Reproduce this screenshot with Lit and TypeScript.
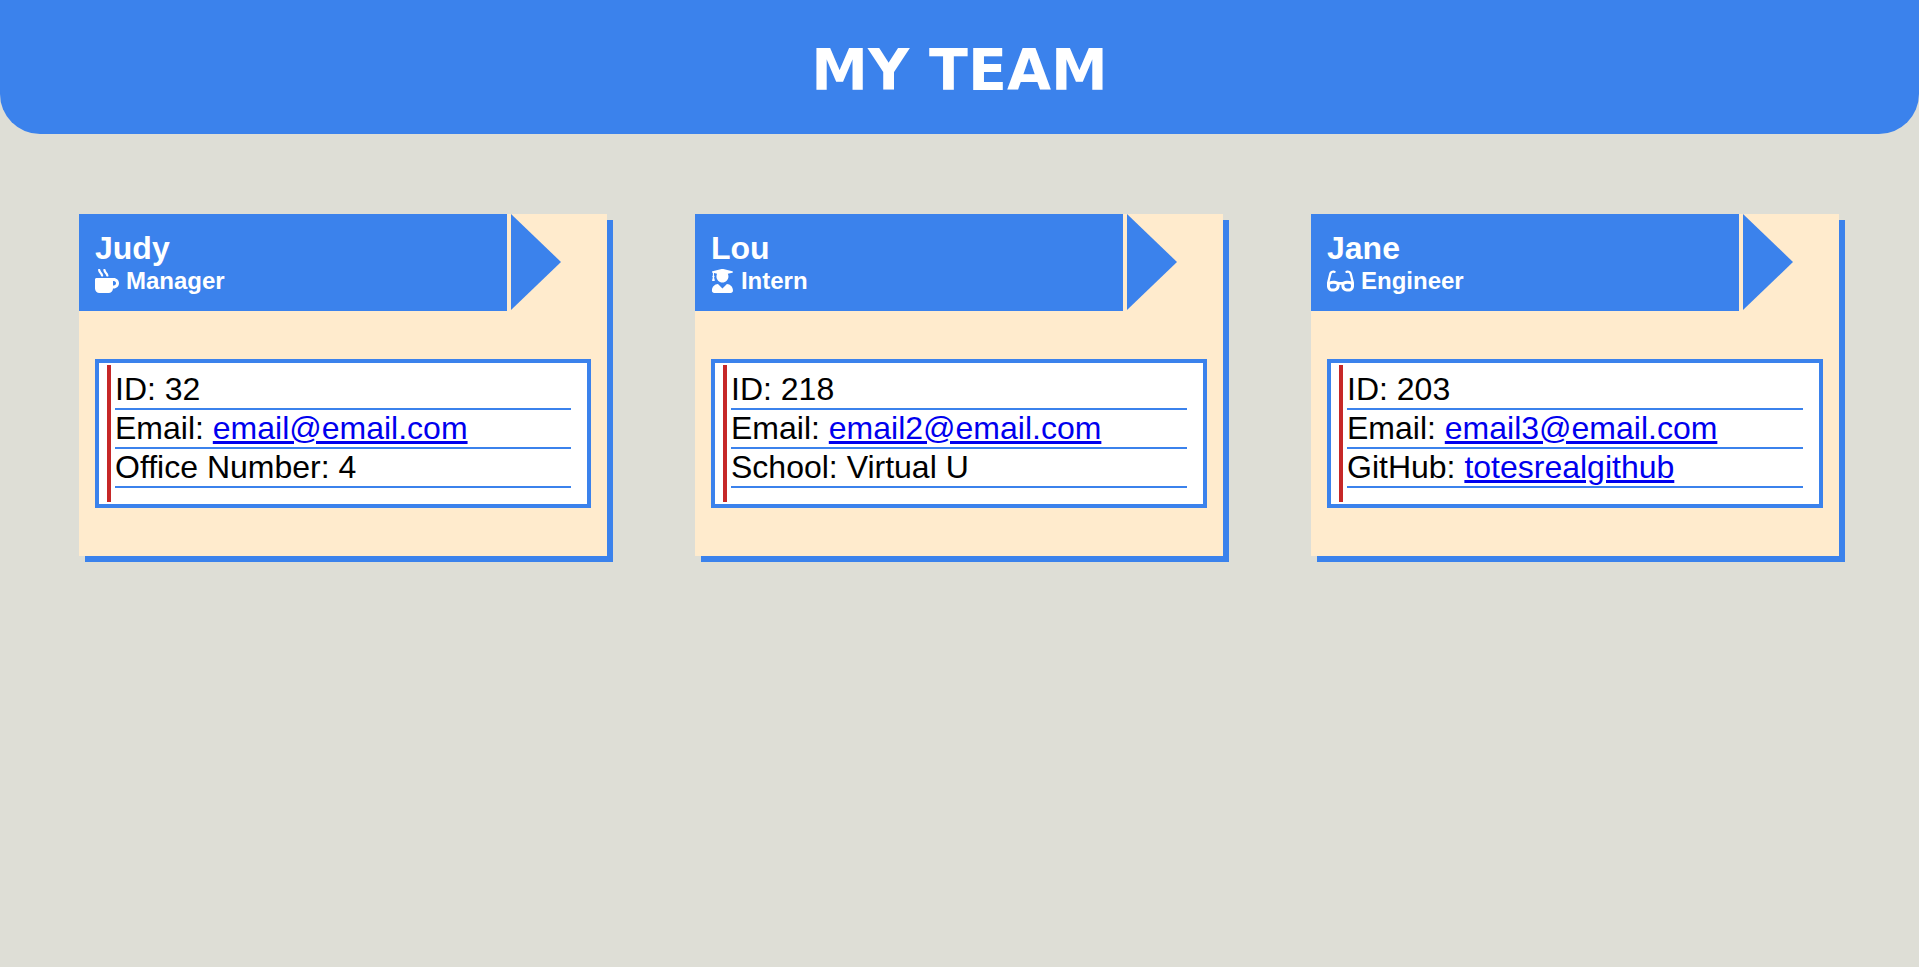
import { LitElement, html, css, svg } from "lit";
import { customElement, property } from "lit/decorators.js";

interface Fact {
  label: string;
  value: string;
  href?: string;
}

interface Member {
  name: string;
  role: string;
  icon: string;
  facts: Fact[];
}

const ICONS: Record<string, { viewBox: string; path: string }> = {
  mug: {
    viewBox: "0 0 512 512",
    path: "M127.1 146.5c1.3 7.7 8 13.5 16 13.5h16.5c9.8 0 17.6-8.5 16.3-18-3.8-28.2-16.4-54.2-36.6-74.7-14.4-14.7-23.6-33.3-26.4-53.5C111.8 5.9 105 0 96.8 0H80.4C70.6 0 63 8.5 64.1 18c3.9 31.9 18 61.3 40.6 84.4 12 12.2 19.7 27.5 22.4 44.1zm112 0c1.3 7.7 8 13.5 16 13.5h16.5c9.8 0 17.6-8.5 16.3-18-3.8-28.2-16.4-54.2-36.6-74.7-14.4-14.7-23.6-33.3-26.4-53.5C223.8 5.9 217 0 208.8 0h-16.4c-9.8 0-17.5 8.5-16.3 18 3.9 31.9 18 61.3 40.6 84.4 12 12.2 19.7 27.5 22.4 44.1zM400 192H32c-17.7 0-32 14.3-32 32v192c0 53 43 96 96 96h192c53 0 96-43 96-96h16c61.8 0 112-50.2 112-112s-50.2-112-112-112zm0 160h-16v-96h16c26.5 0 48 21.5 48 48s-21.5 48-48 48z",
  },
  graduate: {
    viewBox: "-20 0 488 512",
    path: "M319.4 320.6L224 416l-95.4-95.4C57.1 323.7 0 382.2 0 454.4v9.6c0 26.5 21.5 48 48 48h352c26.5 0 48-21.5 48-48v-9.6c0-72.2-57.1-130.7-128.6-133.8zM13.6 79.8l6.4 1.5v58.4c-7 4.2-12 11.5-12 20.3 0 8.4 4.6 15.4 11.1 19.7L3.5 242c-1.7 6.9 2.1 14 7.6 14h41.8c5.5 0 9.3-7.1 7.6-14l-15.6-62.3C51.4 175.4 56 168.4 56 160c0-8.8-5-16.1-12-20.3V87.1l66 15.9c-8.6 17.2-14 36.4-14 57 0 70.7 57.3 128 128 128s128-57.3 128-128c0-20.6-5.3-39.8-14-57l96.3-23.2c18.2-4.4 18.2-27.1 0-31.5l-190.4-46c-13-3.1-26.7-3.1-39.7 0L13.6 48.2c-18.1 4.4-18.1 27.2 0 31.6z",
  },
  glasses: {
    viewBox: "0 0 576 512",
    path: "M574.1 280.37L528.75 98.66c-5.91-23.7-21.59-44.05-43-55.81-21.44-11.73-46.97-14.11-70.19-6.33l-15.25 5.08c-8.39 2.79-12.92 11.86-10.12 20.24l5.06 15.18c2.79 8.38 11.85 12.91 20.23 10.12l13.18-4.39c10.87-3.62 23-3.57 33.16 1.73 10.29 5.37 17.57 14.56 20.37 25.82l38.46 153.82c-22.19-6.81-49.79-12.46-81.2-12.46-34.77 0-73.98 7.02-114.85 26.74h-73.18c-40.87-19.74-80.08-26.75-114.86-26.75-31.42 0-59.02 5.65-81.21 12.46l38.46-153.83c2.79-11.25 10.09-20.45 20.38-25.81 10.16-5.3 22.28-5.35 33.15-1.73l13.17 4.39c8.38 2.79 17.44-1.74 20.23-10.12l5.06-15.18c2.8-8.38-1.73-17.45-10.12-20.24l-15.25-5.08c-23.22-7.78-48.75-5.41-70.19 6.33-21.41 11.77-37.09 32.11-43 55.8L1.9 280.37A64.218 64.218 0 0 0 0 295.86v70.25C0 429.01 51.58 480 115.2 480h37.12c60.28 0 110.37-45.94 114.88-105.37l2.93-38.63h35.75l2.93 38.63C313.31 434.06 363.4 480 423.68 480h37.12c63.62 0 115.2-50.99 115.2-113.88v-70.25c0-5.23-.64-10.43-1.9-15.5zm-370.72 89.42c-1.97 25.91-24.4 46.21-51.06 46.21H115.2C86.97 416 64 393.62 64 366.11v-37.54c18.12-6.49 43.42-12.92 72.58-12.92 23.86 0 47.26 4.33 69.93 12.92l-3.13 41.22zM512 366.12c0 27.51-22.97 49.88-51.2 49.88h-37.12c-26.67 0-49.1-20.3-51.06-46.21l-3.13-41.22c22.67-8.59 46.08-12.92 69.95-12.92 29.12 0 54.43 6.44 72.55 12.93v37.54z",
  },
};

const TEAM: Member[] = [
  {
    name: "Judy",
    role: "Manager",
    icon: "mug",
    facts: [
      { label: "ID", value: "32" },
      { label: "Email", value: "email@email.com", href: "mailto:email@email.com" },
      { label: "Office Number", value: "4" },
    ],
  },
  {
    name: "Lou",
    role: "Intern",
    icon: "graduate",
    facts: [
      { label: "ID", value: "218" },
      { label: "Email", value: "email2@email.com", href: "mailto:email2@email.com" },
      { label: "School", value: "Virtual U" },
    ],
  },
  {
    name: "Jane",
    role: "Engineer",
    icon: "glasses",
    facts: [
      { label: "ID", value: "203" },
      { label: "Email", value: "email3@email.com", href: "mailto:email3@email.com" },
      { label: "GitHub", value: "totesrealgithub", href: "https://github.com/totesrealgithub" },
    ],
  },
];

@customElement("member-card")
export class MemberCard extends LitElement {
  @property({ attribute: false }) member!: Member;

  static styles = css`
    :host {
      display: block;
      background: #ffebcd;
      box-shadow: 6px 6px #3b82ec;
    }
    .top {
      display: flex;
      gap: 4px;
      padding-right: 46px;
    }
    .banner {
      flex: 1;
      padding: 16px;
      background: #3b82ec;
      color: #fff;
    }
    .arrow {
      width: 50px;
      height: 96px;
      background: #3b82ec;
      clip-path: polygon(0 0, 100% 50%, 0 100%);
    }
    .name {
      margin: 0;
      font-size: 32px;
      line-height: 37px;
    }
    .role {
      display: flex;
      align-items: center;
      gap: 7px;
      margin: 0;
      font-size: 24px;
      line-height: 28px;
    }
    .icon {
      display: block;
      height: 24px;
      fill: currentColor;
    }
    .note {
      margin: 48px 16px;
      padding: 2px 16px 2px 8px;
      border: 4px solid #3b82ec;
      background: #fff;
    }
    .facts {
      margin: 0;
      padding: 6px 0 14px 4px;
      border-left: 4px solid #c62828;
      list-style: none;
      font-size: 32px;
      line-height: 37px;
    }
    .fact {
      border-bottom: 2px solid #3b82ec;
    }
    .link {
      color: #0000ee;
    }
    .body {
      display: flow-root;
    }
  `;

  render() {
    const { name, role, icon, facts } = this.member;
    const { viewBox, path } = ICONS[icon];
    return html`
      <div class="top">
        <div class="banner">
          <h2 class="name">${name}</h2>
          <h3 class="role">
            <svg class="icon" viewBox=${viewBox} aria-hidden="true">${svg`<path d=${path}></path>`}</svg>
            <span>${role}</span>
          </h3>
        </div>
        <div class="arrow"></div>
      </div>
      <div class="body">
        <div class="note">
          <ul class="facts">
            ${facts.map(
              (f) => html`<li class="fact">${f.label}: ${f.href ? html`<a class="link" href=${f.href}>${f.value}</a>` : f.value}</li>`
            )}
          </ul>
        </div>
      </div>
    `;
  }
}

@customElement("app-root")
export class AppRoot extends LitElement {
  static styles = css`
    :host {
      display: block;
      min-height: 100vh;
      background: #deded6;
      color: #000;
      font-family: "Liberation Sans", Arial, sans-serif;
    }
    .header {
      padding: 35px 32px 29px;
      border-radius: 0 0 40px 40px;
      background: #3b82ec;
      color: #fff;
      text-align: center;
    }
    .title {
      margin: 0;
      font-family: "DejaVu Sans", Verdana, sans-serif;
      font-size: 57px;
      line-height: 70px;
    }
    .team {
      display: grid;
      grid-template-columns: repeat(auto-fit, minmax(460px, 1fr));
      gap: 88px;
      padding: 80px 80px 80px 79px;
    }
  `;

  render() {
    return html`
      <header class="header"><h1 class="title">MY TEAM</h1></header>
      <main class="team">
        ${TEAM.map((m) => html`<member-card .member=${m}></member-card>`)}
      </main>
    `;
  }
}
